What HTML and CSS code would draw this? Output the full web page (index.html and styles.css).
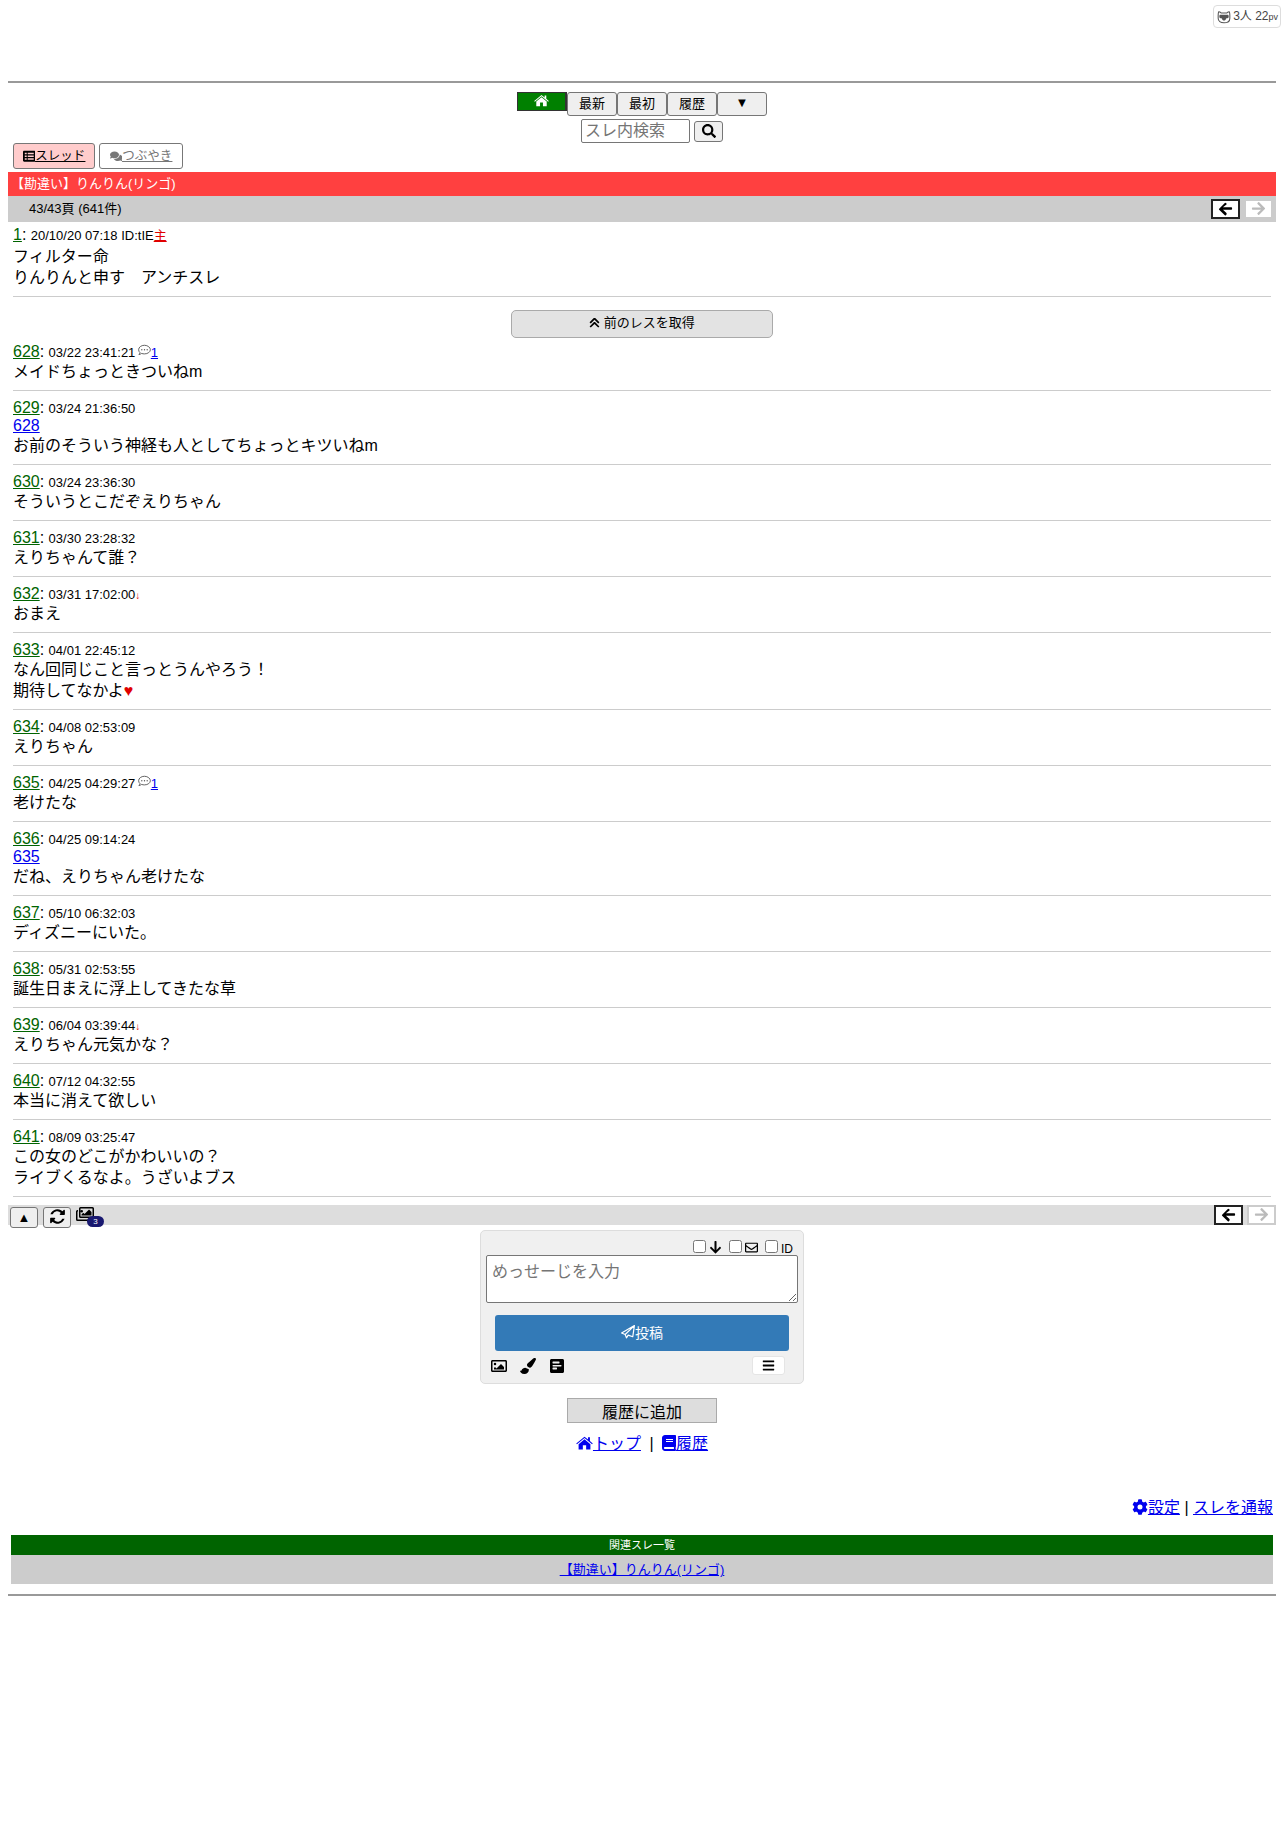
FILE: index.html
```html
<!DOCTYPE html>
<html lang="ja">
<head>
  <meta charset="UTF-8" />
  <title>【勘違い】りんりん(リンゴ)</title>
  <link rel="stylesheet" href="styles.css">
</head>
<body>
  <svg class="icon-defs" width="0" height="0">
    <symbol id="i-home" viewBox="0 0 576 512"><path d="M288 40 8 272l24 30 256-212 256 212 24-30-96-80V64h-64v76zM288 130 88 296v176h144V336h112v136h144V296z"/></symbol>
    <symbol id="i-left" viewBox="0 0 448 512"><path d="M257 467l-22 22a24 24 0 0 1-34 0L7 295a24 24 0 0 1 0-34L201 67a24 24 0 0 1 34 0l22 22a24 24 0 0 1 0 34L137 216h287a24 24 0 0 1 24 24v32a24 24 0 0 1-24 24H137l120 113a24 24 0 0 1 0 34z"/></symbol>
    <symbol id="i-right" viewBox="0 0 448 512"><path d="M191 45l22-22a24 24 0 0 1 34 0l194 194a24 24 0 0 1 0 34L247 445a24 24 0 0 1-34 0l-22-22a24 24 0 0 1 0-34l120-113H24a24 24 0 0 1-24-24v-32a24 24 0 0 1 24-24h287L191 79a24 24 0 0 1 0-34z" transform="translate(0 22)"/></symbol>
    <symbol id="i-bubble" viewBox="0 0 512 512"><path fill="none" stroke="currentColor" stroke-width="36" d="M256 50C127 50 24 128 24 226c0 45 22 84 56 116-10 34-34 62-44 74 30-4 74-20 108-44 34 12 72 18 112 18 129 0 232-78 232-164S385 50 256 50z"/><circle cx="150" cy="226" r="26"/><circle cx="256" cy="226" r="26"/><circle cx="362" cy="226" r="26"/></symbol>
    <symbol id="i-images" viewBox="0 0 576 512"><path d="M480 416v16a48 48 0 0 1-48 48H48a48 48 0 0 1-48-48V176a48 48 0 0 1 48-48h16v48H54a6 6 0 0 0-6 6v244a6 6 0 0 0 6 6h372a6 6 0 0 0 6-6v-10zM528 32H144a48 48 0 0 0-48 48v256a48 48 0 0 0 48 48h384a48 48 0 0 0 48-48V80a48 48 0 0 0-48-48zm-6 304H150a6 6 0 0 1-6-6V86a6 6 0 0 1 6-6h372a6 6 0 0 1 6 6v244a6 6 0 0 1-6 6zM184 128a40 40 0 1 0 0 80 40 40 0 0 0 0-80zm-8 176h320V192l-70-70a12 12 0 0 0-17 0L272 256l-30-30a12 12 0 0 0-17 0l-49 49z"/></symbol>
  </svg>

  <div class="counter">
    <svg class="counter-face" viewBox="0 0 24 24"><path fill="none" stroke="#555" stroke-width="1.8" d="M3 3c2 0 3 1 4 2h10c1-1 2-2 4-2 1 2 1 4 1 6v5c0 5-4 8-10 8S2 19 2 14V9c0-2 0-4 1-6z"/><path fill="#555" d="M6 8h12c1 0 2 1 2 2v2c0 1-1 2-2 2h-2c-1 3-2 4-4 4s-3-1-4-4H6c-1 0-2-1-2-2v-2c0-1 1-2 2-2z"/></svg>
    <span>3人 22<small>pv</small></span>
  </div>

  <div class="ad-space"></div>
  <hr class="rule">

  <nav class="top-nav">
    <a class="nav-home" href="#"><svg class="ico"><use href="#i-home"/></svg></a><button class="nav-btn">最新</button><button class="nav-btn">最初</button><button class="nav-btn">履歴</button><button class="nav-btn">▼</button>
  </nav>
  <div class="search-row">
    <input class="search-input" type="text" placeholder="スレ内検索">
    <button class="search-btn"><svg viewBox="0 0 512 512"><path d="M505 443 405 343c-4-4-10-7-17-7h-16c28-35 44-80 44-128C416 93 323 0 208 0S0 93 0 208s93 208 208 208c48 0 93-16 128-44v16c0 7 3 13 7 17l100 100c9 9 25 9 34 0l28-28c9-10 9-25 0-34zM208 336a128 128 0 1 1 0-256 128 128 0 0 1 0 256z"/></svg></button>
  </div>

  <div class="tabs">
    <a class="tab tab-active" href="#"><svg class="ico" viewBox="0 0 512 512"><path fill-rule="evenodd" d="M48 32h416c27 0 48 21 48 48v352c0 27-21 48-48 48H48c-27 0-48-21-48-48V80c0-27 21-48 48-48zM72 112v64h80v-64zm120 0v64h248v-64zM72 224v64h80v-64zm120 0v64h248v-64zM72 336v64h80v-64zm120 0v64h248v-64z"/></svg><span>スレッド</span></a>
    <a class="tab" href="#"><svg class="ico" viewBox="0 0 576 512"><path d="M416 192c0-88-93-160-208-160S0 104 0 192c0 34 14 66 38 92-13 30-35 54-35 54-3 3-4 8-2 11s5 6 9 6c37 0 67-12 89-26 33 17 71 23 109 23 115 0 208-72 208-160zm122 220c24-26 38-58 38-92 0-67-54-125-130-149 1 7 2 14 2 21 0 106-108 192-240 192-11 0-21-1-32-2 31 57 105 98 192 98 38 0 76-8 109-23 22 14 52 26 89 26 4 0 7-2 9-6 2-3 1-8-2-11 0 0-22-24-35-54z"/></svg><span>つぶやき</span></a>
  </div>

  <div class="title-bar">【勘違い】りんりん(リンゴ)</div>
  <div class="pager-bar">
    <span class="pager-text">43/43頁 (641件)</span>
    <span class="arrows">
      <a class="arrow" href="#"><svg class="ico"><use href="#i-left"/></svg></a>
      <a class="arrow arrow-off" href="#"><svg class="ico"><use href="#i-right"/></svg></a>
    </span>
  </div>

  <div class="post post-first">
    <div class="post-head"><a class="num" href="#">1</a>: <span class="date">20/10/20 07:18 ID:tIE</span><a class="owner" href="#">主</a></div>
    <div class="post-body">フィルター命<br>りんりんと申す　アンチスレ</div>
  </div>

  <div class="prev-wrap">
    <button class="prev-btn"><svg class="ico" viewBox="0 0 448 512"><path d="M177 255 7 425c-9 9-9 25 0 34l23 23c9 9 25 9 34 0l160-160 160 160c9 9 25 9 34 0l23-23c9-9 9-25 0-34L271 255c-26-26-68-26-94 0zm0-192L7 233c-9 9-9 25 0 34l23 23c9 9 25 9 34 0l160-160 160 160c9 9 25 9 34 0l23-23c9-9 9-25 0-34L271 63c-26-26-68-26-94 0z"/></svg> 前のレスを取得</button>
  </div>

  <div class="post">
    <div class="post-head"><a class="num" href="#">628</a>: <span class="date">03/22 23:41:21</span> <svg class="bubble"><use href="#i-bubble"/></svg><a class="reply-count" href="#">1</a></div>
    <div class="post-body">メイドちょっときついねm</div>
  </div>
  <div class="post">
    <div class="post-head"><a class="num" href="#">629</a>: <span class="date">03/24 21:36:50</span></div>
    <a class="anchor" href="#">628</a>
    <div class="post-body">お前のそういう神経も人としてちょっとキツいねm</div>
  </div>
  <div class="post">
    <div class="post-head"><a class="num" href="#">630</a>: <span class="date">03/24 23:36:30</span></div>
    <div class="post-body">そういうとこだぞえりちゃん</div>
  </div>
  <div class="post">
    <div class="post-head"><a class="num" href="#">631</a>: <span class="date">03/30 23:28:32</span></div>
    <div class="post-body">えりちゃんて誰？</div>
  </div>
  <div class="post">
    <div class="post-head"><a class="num" href="#">632</a>: <span class="date">03/31 17:02:00</span><span class="down">↓</span></div>
    <div class="post-body">おまえ</div>
  </div>
  <div class="post">
    <div class="post-head"><a class="num" href="#">633</a>: <span class="date">04/01 22:45:12</span></div>
    <div class="post-body">なん回同じこと言っとうんやろう！<br>期待してなかよ<span class="heart">♥</span></div>
  </div>
  <div class="post">
    <div class="post-head"><a class="num" href="#">634</a>: <span class="date">04/08 02:53:09</span></div>
    <div class="post-body">えりちゃん</div>
  </div>
  <div class="post">
    <div class="post-head"><a class="num" href="#">635</a>: <span class="date">04/25 04:29:27</span> <svg class="bubble"><use href="#i-bubble"/></svg><a class="reply-count" href="#">1</a></div>
    <div class="post-body">老けたな</div>
  </div>
  <div class="post">
    <div class="post-head"><a class="num" href="#">636</a>: <span class="date">04/25 09:14:24</span></div>
    <a class="anchor" href="#">635</a>
    <div class="post-body">だね、えりちゃん老けたな</div>
  </div>
  <div class="post">
    <div class="post-head"><a class="num" href="#">637</a>: <span class="date">05/10 06:32:03</span></div>
    <div class="post-body">ディズニーにいた。</div>
  </div>
  <div class="post">
    <div class="post-head"><a class="num" href="#">638</a>: <span class="date">05/31 02:53:55</span></div>
    <div class="post-body">誕生日まえに浮上してきたな草</div>
  </div>
  <div class="post">
    <div class="post-head"><a class="num" href="#">639</a>: <span class="date">06/04 03:39:44</span><span class="down">↓</span></div>
    <div class="post-body">えりちゃん元気かな？</div>
  </div>
  <div class="post">
    <div class="post-head"><a class="num" href="#">640</a>: <span class="date">07/12 04:32:55</span></div>
    <div class="post-body">本当に消えて欲しい</div>
  </div>
  <div class="post">
    <div class="post-head"><a class="num" href="#">641</a>: <span class="date">08/09 03:25:47</span></div>
    <div class="post-body">この女のどこがかわいいの？<br>ライブくるなよ。うざいよブス</div>
  </div>

  <div class="bottom-bar">
    <button class="tool-btn">▲</button>
    <button class="tool-btn"><svg class="ico" viewBox="0 0 512 512"><path d="M370 133a168 168 0 0 0-278 44H14a256 256 0 0 1 412-100l41-41c15-15 41-4 41 17v128c0 13-11 24-24 24H356c-21 0-32-26-17-41zM28 296h128c21 0 32 26 17 41l-31 42a168 168 0 0 0 278-44h78A256 256 0 0 1 86 435l-41 41c-15 15-41 4-41-17V320c0-13 11-24 24-24z"/></svg></button>
    <span class="images-btn"><svg class="ico"><use href="#i-images"/></svg><span class="badge">3</span></span>
    <span class="arrows">
      <a class="arrow" href="#"><svg class="ico"><use href="#i-left"/></svg></a>
      <a class="arrow arrow-off" href="#"><svg class="ico"><use href="#i-right"/></svg></a>
    </span>
  </div>

  <form class="post-form">
    <div class="form-options">
      <label><input type="checkbox"><svg class="ico" viewBox="0 0 448 512"><path d="M413 233l22 22c9 9 9 25 0 34L241 483c-9 9-25 9-34 0L13 289c-9-9-9-25 0-34l22-22c10-10 25-9 34 0l115 121V24c0-13 11-24 24-24h32c13 0 24 11 24 24v330l115-121c9-9 24-10 34 0z"/></svg></label>
      <label><input type="checkbox"><svg class="ico" viewBox="0 0 512 512"><path d="M464 64H48C21 64 0 85 0 112v288c0 27 21 48 48 48h416c27 0 48-21 48-48V112c0-27-21-48-48-48zm0 48v41c-22 18-58 47-135 107-17 13-51 46-73 46s-56-33-73-46C106 200 70 171 48 153v-41zM48 400V215c23 18 55 44 105 83 22 17 60 54 103 54s80-37 103-54c50-39 82-65 105-83v185z"/></svg></label>
      <label><input type="checkbox"><span class="id-label">ID</span></label>
    </div>
    <textarea class="message" placeholder="めっせーじを入力"></textarea>
    <button class="submit-btn" type="button"><svg class="ico" viewBox="0 0 512 512"><path fill="none" stroke="currentColor" stroke-width="44" stroke-linejoin="round" d="M490 22 22 292l130 54L490 22 430 430 262 370l-62 100-48-124"/></svg>投稿</button>
    <div class="form-tools">
      <svg class="tool-ico" viewBox="0 0 512 512"><path d="M464 64H48C21 64 0 85 0 112v288c0 27 21 48 48 48h416c27 0 48-21 48-48V112c0-27-21-48-48-48zm-6 336H54a6 6 0 0 1-6-6V118a6 6 0 0 1 6-6h404a6 6 0 0 1 6 6v276a6 6 0 0 1-6 6zM128 152a40 40 0 1 0 0 80 40 40 0 0 0 0-80zm-32 216h320V288l-88-88a12 12 0 0 0-17 0L176 336l-40-40a12 12 0 0 0-17 0l-23 23z"/></svg>
      <svg class="tool-ico" viewBox="0 0 512 512"><path d="M167 309c-50 4-95 23-121 90-3 8-10 12-18 12-14 0-28-12-28-12 0 48 46 113 142 113 81 0 142-60 142-136 0-6-1-12-2-18zM458 0c-14 0-27 6-37 15C242 175 224 179 224 226c0 12 3 23 8 34l56 47c6 2 12 2 18 2 54 0 85-40 184-224 6-12 22-42 22-56 0-17-24-29-54-29z"/></svg>
      <svg class="tool-ico" viewBox="0 0 448 512"><path d="M400 32H48C21 32 0 53 0 80v352c0 27 21 48 48 48h352c27 0 48-21 48-48V80c0-27-21-48-48-48zM96 112h192c9 0 16 7 16 16v32c0 9-7 16-16 16H96c-9 0-16-7-16-16v-32c0-9 7-16 16-16zm256 160H96c-9 0-16-7-16-16v-16c0-9 7-16 16-16h256c9 0 16 7 16 16v16c0 9-7 16-16 16zm-144 96H96c-9 0-16-7-16-16v-32c0-9 7-16 16-16h112c9 0 16 7 16 16v32c0 9-7 16-16 16z"/></svg>
      <button class="menu-btn" type="button"><svg class="ico" viewBox="0 0 448 512"><path d="M16 132h416c9 0 16-7 16-16V76c0-9-7-16-16-16H16C7 60 0 67 0 76v40c0 9 7 16 16 16zm0 160h416c9 0 16-7 16-16v-40c0-9-7-16-16-16H16c-9 0-16 7-16 16v40c0 9 7 16 16 16zm0 160h416c9 0 16-7 16-16v-40c0-9-7-16-16-16H16c-9 0-16 7-16 16v40c0 9 7 16 16 16z"/></svg></button>
    </div>
  </form>

  <div class="history-wrap"><button class="history-btn">履歴に追加</button></div>
  <div class="links-center">
    <a href="#"><svg class="ico"><use href="#i-home"/></svg>トップ</a> <span class="sep">|</span> <a href="#"><svg class="ico book" viewBox="0 0 448 512"><path d="M448 360V24c0-13-11-24-24-24H96C43 0 0 43 0 96v320c0 53 43 96 96 96h328c13 0 24-11 24-24v-16c0-8-3-15-9-20-4-15-4-57 0-71 6-6 9-13 9-21zM128 134c0-3 3-6 6-6h212c3 0 6 3 6 6v20c0 3-3 6-6 6H134c-3 0-6-3-6-6zm0 64c0-3 3-6 6-6h212c3 0 6 3 6 6v20c0 3-3 6-6 6H134c-3 0-6-3-6-6zm254 250H96c-18 0-32-14-32-32s14-32 32-32h286c-2 17-2 47 0 64z"/></svg>履歴</a>
  </div>
  <div class="links-right">
    <a href="#"><svg class="ico" viewBox="0 0 512 512"><path d="M487 316l-42-25a190 190 0 0 0 0-70l42-25c5-3 7-8 5-14-11-35-30-67-54-93-4-4-10-5-15-2l-42 24c-18-15-38-27-60-35V28c0-6-4-11-9-12-37-8-74-8-110 0-5 1-9 6-9 12v48c-22 8-42 20-60 35L91 87c-5-3-11-2-15 2-24 26-43 58-54 93-2 6 0 11 5 14l42 25a190 190 0 0 0 0 70l-42 25c-5 3-7 8-5 14 11 35 30 67 54 93 4 4 10 5 15 2l42-24c18 15 38 27 60 35v48c0 6 4 11 9 12 37 8 74 8 110 0 5-1 9-6 9-12v-48c22-8 42-20 60-35l42 24c5 3 11 2 15-2 24-26 43-58 54-93 2-6 0-11-5-14zM256 336a80 80 0 1 1 0-160 80 80 0 0 1 0 160z"/></svg>設定</a> | <a href="#">スレを通報</a>
  </div>

  <div class="related">
    <div class="related-head">関連スレ一覧</div>
    <div class="related-body"><a href="#">【勘違い】りんりん(リンゴ)</a></div>
  </div>
  <hr class="rule">
</body>
</html>
```
FILE: styles.css
```css
body {
  font-family: "Liberation Sans", "Noto Sans CJK JP", sans-serif;
  font-size: 16px;
  line-height: 18px;
  color: #000;
  background: #fff;
  margin: 8px;
  min-height: 1823px;
}

a {
  color: #0000ee;
}

button {
  font-family: inherit;
}

.icon-defs {
  display: block;
  height: 0;
}

.ico {
  display: inline-block;
  width: 1em;
  height: 1em;
  fill: currentColor;
  vertical-align: -0.12em;
}

.rule {
  height: 2px;
  margin: 0;
  border: 0;
  background: #999;
}

.ad-space {
  height: 73px;
}

.counter {
  position: absolute;
  top: 5px;
  right: 3px;
  display: flex;
  align-items: center;
  gap: 2px;
  height: 21px;
  padding: 0 2px 0 3px;
  border: 1px solid #ddd;
  border-radius: 4px;
  font-size: 12px;
  color: #444;
}

.counter small {
  font-size: 9px;
}

.counter-face {
  width: 14px;
  height: 14px;
}

.top-nav {
  display: flex;
  justify-content: center;
  align-items: flex-start;
  margin-top: 9px;
}

.nav-home {
  display: block;
  width: 50px;
  height: 19px;
  box-sizing: border-box;
  background: #008000;
  border: 1px solid #333;
  border-width: 1px 2px 1px 1px;
  color: #fff;
  text-align: center;
  font-size: 15px;
  line-height: 14px;
}

.nav-btn {
  width: 50px;
  height: 24px;
  padding: 0 0 3px;
  background: #efefef;
  border: 1px solid #767676;
  border-radius: 3px;
  font-size: 13px;
}

.search-row {
  display: flex;
  justify-content: center;
  align-items: center;
  gap: 4px;
  height: 24px;
  margin-top: 3px;
  padding-left: 20px;
}

.search-input {
  box-sizing: border-box;
  width: 109px;
  height: 24px;
  padding: 1px 3px;
  border: 1px solid #767676;
  border-radius: 2px;
  font-family: inherit;
  font-size: 16px;
}

.search-btn {
  width: 29px;
  height: 21px;
  padding: 0;
  background: #efefef;
  border: 1px solid #767676;
  border-radius: 3px;
}

.search-btn svg {
  display: block;
  width: 14px;
  height: 14px;
  margin: auto;
}

.tabs {
  display: flex;
  gap: 4px;
  height: 26px;
  margin: 0 0 3px 5px;
}

.tab {
  display: flex;
  align-items: center;
  justify-content: center;
  box-sizing: border-box;
  width: 84px;
  border: 1px solid #777;
  border-radius: 3px;
  font-size: 12.5px;
  color: #777;
}

.tab span {
  text-decoration: underline;
}

.tab-active {
  width: 82px;
  background: #ffcccc;
  color: #000;
}

.title-bar {
  height: 24px;
  padding-left: 3px;
  background: #ff4040;
  color: #fff;
  font-size: 13px;
  line-height: 24px;
}

.pager-bar {
  display: flex;
  justify-content: space-between;
  align-items: center;
  height: 26px;
  padding-left: 21px;
  background: #ccc;
  font-size: 13px;
}

.arrows {
  display: flex;
  gap: 4px;
  margin-right: 3px;
}

.arrow {
  display: block;
  box-sizing: border-box;
  width: 29px;
  height: 20px;
  background: #fff;
  border: 2px solid #222;
  color: #000;
  font-size: 15px;
  line-height: 15px;
  text-align: center;
}

.arrow-off {
  border-color: #ccc;
  color: #bbb;
}

.post {
  padding: 8px 0 8px;
  margin: 0 5px;
  border-bottom: 1px solid #ccc;
}

.post-first {
  padding: 4px 0 8px;
}

.post-first .post-head {
  height: 20px;
}

.prev-wrap + .post {
  padding-top: 5px;
}

.post-head {
  height: 18px;
}

.num {
  color: #006400;
}

.date {
  font-size: 13px;
}

.owner {
  font-size: 13px;
  color: #e00000;
}

.reply-count {
  font-size: 13px;
}

.bubble {
  width: 13px;
  height: 13px;
  margin-left: -2px;
  fill: #555;
  color: #555;
}

.down {
  font-size: 10px;
  color: #e00000;
}

.heart {
  color: #e00000;
}

.anchor {
  display: block;
}

.post-body {
  line-height: 21px;
}

.prev-wrap {
  display: flex;
  justify-content: center;
  margin-top: 13px;
}

.prev-btn {
  box-sizing: border-box;
  width: 262px;
  height: 28px;
  padding: 0 0 6px;
  background: #e3e3e3;
  border: 1px solid #aaa;
  border-radius: 5px;
  font-size: 13px;
}

.prev-btn .ico {
  width: 11px;
  height: 11px;
}

.bottom-bar {
  display: flex;
  align-items: flex-start;
  gap: 5px;
  height: 20px;
  margin-top: 8px;
  padding-left: 2px;
  background: #ddd;
}

.bottom-bar .arrows {
  margin-left: auto;
  margin-right: 0;
}

.tool-btn {
  box-sizing: border-box;
  width: 28px;
  height: 21px;
  margin-top: 2px;
  padding: 0;
  background: #efefef;
  border: 1px solid #767676;
  border-radius: 3px;
  font-size: 13px;
}

.tool-btn .ico {
  width: 15px;
  height: 15px;
}

.images-btn {
  position: relative;
  font-size: 18px;
  line-height: 20px;
}

.badge {
  position: absolute;
  top: 11px;
  left: 11px;
  width: 17px;
  height: 11px;
  border-radius: 6px;
  background: #191970;
  color: #fff;
  font-size: 8px;
  line-height: 11px;
  text-align: center;
}

.post-form {
  box-sizing: border-box;
  width: 324px;
  height: 154px;
  margin: 5px auto 0;
  padding: 9px 5px 0;
  background: #f0f0f0;
  border: 1px solid #ddd;
  border-radius: 5px;
}

.form-options {
  display: flex;
  justify-content: flex-end;
  gap: 7px;
  height: 15px;
  padding-right: 5px;
  font-size: 13px;
}

.form-options label {
  display: flex;
  align-items: center;
  gap: 3px;
}

.form-options input {
  margin: 0 0 2px;
  width: 13px;
  height: 13px;
}

.id-label {
  font-size: 12px;
  margin-top: 2px;
}

.message {
  display: block;
  box-sizing: border-box;
  width: 312px;
  height: 48px;
  padding: 2px 5px;
  border: 1px solid #767676;
  border-radius: 2px;
  font-family: inherit;
  font-size: 16px;
}

.submit-btn {
  display: block;
  width: 294px;
  height: 36px;
  margin: 12px auto 0;
  padding: 0 0 3px;
  background: #337ab7;
  border: 0;
  border-radius: 3px;
  color: #fff;
  font-size: 14px;
}

.form-tools {
  display: flex;
  align-items: center;
  gap: 13px;
  margin: 5px 0 0 5px;
}

.tool-ico {
  width: 16px;
  height: 16px;
}

.menu-btn {
  width: 33px;
  height: 19px;
  margin-left: auto;
  margin-right: 13px;
  padding: 0;
  background: #fff;
  border: 1px solid #e5e5e5;
  border-radius: 3px;
  font-size: 13px;
}

.history-wrap {
  display: flex;
  justify-content: center;
  margin-top: 14px;
}

.history-btn {
  width: 150px;
  height: 25px;
  padding: 0 0 4px;
  background: #ddd;
  border: 1px solid #aaa;
  font-size: 16px;
}

.links-center {
  margin-top: 12px;
  text-align: center;
}

.links-center .ico {
  width: 17px;
  height: 16px;
  vertical-align: -0.14em;
}

.links-center .book {
  width: 14px;
}

.sep {
  margin: 0 4px;
}

.links-right {
  margin: 46px 3px 0 0;
  text-align: right;
}

.related {
  margin: 18px 3px 0;
  text-align: center;
  font-size: 13px;
}

.related-head {
  height: 20px;
  background: #006400;
  color: #fff;
  font-size: 11px;
  line-height: 20px;
}

.related-body {
  height: 29px;
  background: #ccc;
  line-height: 29px;
}

.related + .rule {
  margin-top: 10px;
}
```
